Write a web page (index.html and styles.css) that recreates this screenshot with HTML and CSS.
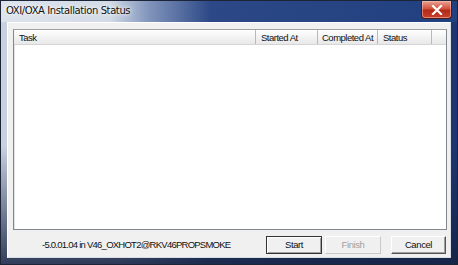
FILE: index.html
```html
<!DOCTYPE html>
<html lang="en">
<head>
  <meta charset="UTF-8" />
  <title>OXI/OXA Installation Status</title>
  <link rel="stylesheet" href="styles.css">
</head>
<body>
  <div class="window">
    <div class="titlebar">
      <span class="title">OXI/OXA Installation Status</span>
      <button class="close-btn">
        <svg width="12" height="10" viewBox="0 0 12 10">
          <path d="M2 1 L10 9 M10 1 L2 9" stroke="#fff" stroke-width="2.2" stroke-linecap="square" />
        </svg>
      </button>
    </div>

    <div class="client">
      <div class="listview">
        <div class="list-header">
          <div class="col col-task">Task</div>
          <div class="col col-started">Started At</div>
          <div class="col col-completed">Completed At</div>
          <div class="col col-status">Status</div>
          <div class="col col-rest"></div>
        </div>
        <div class="list-body"></div>
      </div>

      <div class="footer">
        <span class="version">-5.0.01.04 in V46_OXHOT2@RKV46PROPSMOKE</span>
        <div class="buttons">
          <button class="btn btn-default">Start</button>
          <button class="btn" disabled>Finish</button>
          <button class="btn btn-cancel">Cancel</button>
        </div>
      </div>
    </div>
  </div>
</body>
</html>
```

FILE: styles.css
```css
* {
  box-sizing: border-box;
}

html, body {
  margin: 0;
  padding: 0;
  width: 458px;
  height: 265px;
  overflow: hidden;
  font-family: 'Liberation Sans', Arial, sans-serif;
  font-size: 10px;
}

.window {
  width: 458px;
  height: 265px;
  border: 1px solid #1c2438;
  background:
    linear-gradient(180deg, rgba(22, 34, 66, 0) 55%, rgba(22, 34, 66, 0.85) 100%),
    linear-gradient(90deg, #c9d2e0 0%, #b4c0d6 25%, #3e5a92 45%, #233f7c 70%, #1d3572 100%);
  display: flex;
  flex-direction: column;
  padding: 0 6px 6px 6px;
}

.titlebar {
  height: 21px;
  display: flex;
  align-items: center;
  justify-content: space-between;
  margin: 0 -6px;
  padding: 0 5px 2px 5px;
  background: linear-gradient(90deg, #dde3ec 0%, #d2dae6 24%, #8497bd 32%, #2c4886 46%, #21407f 100%);
}

.title {
  font-family: 'DejaVu Sans', sans-serif;
  font-size: 10px;
  color: #111;
  text-shadow: 0 0 6px #fff, 0 0 3px #fff;
  letter-spacing: -0.4px;
}

.close-btn {
  width: 31px;
  height: 18px;
  margin-top: -1px;
  border: 1px solid #4a1a16;
  border-top: none;
  border-radius: 0 0 4px 4px;
  background: linear-gradient(180deg, #e8a295 0%, #d2523d 45%, #b42a17 55%, #c8412c 100%);
  display: flex;
  align-items: center;
  justify-content: center;
  padding: 0;
  box-shadow: inset 0 0 0 1px rgba(255, 200, 190, 0.5);
}

.client {
  flex: 1;
  background: #f0f0f0;
  border: 1px solid #ffffff;
  border-right-color: #d8dde6;
  border-bottom-color: #d8dde6;
  display: flex;
  flex-direction: column;
  padding: 6px 3px 0 5px;
}

.listview {
  height: 201px;
  border: 1px solid #828790;
  border-top-color: #a0a0a0;
  background: #fff;
  display: flex;
  flex-direction: column;
}

.list-header {
  height: 15px;
  display: flex;
  background: linear-gradient(180deg, #ffffff 0%, #f3f3f3 50%, #e8e8e8 100%);
  border-bottom: 1px solid #d5d5d5;
}

.col {
  border-right: 1px solid #b9b9b9;
  padding: 1px 0 0 5px;
  color: #111;
  white-space: nowrap;
  line-height: 13px;
  font-size: 9.5px;
  letter-spacing: -0.5px;
}

.col-task { width: 242px; }
.col-started { width: 62px; }
.col-completed { width: 60px; padding-left: 4px; }
.col-status { width: 54px; }
.col-rest { flex: 1; border-right: none; }

.list-body {
  flex: 1;
  border-left: 1px solid #e0e0e0;
}

.footer {
  flex: 1;
  display: flex;
  align-items: center;
  justify-content: space-between;
  padding: 2px 0 0 29px;
}

.version {
  color: #111;
  white-space: nowrap;
  font-size: 9.5px;
  letter-spacing: -0.75px;
}

.buttons {
  display: flex;
  gap: 3px;
  margin-right: 1px;
}

.btn {
  width: 56px;
  height: 18px;
  font-family: 'Liberation Sans', Arial, sans-serif;
  font-size: 9.5px;
  letter-spacing: -0.4px;
  color: #111;
  background: #f0f0f0;
  border: 1px solid;
  border-color: #ffffff #707070 #707070 #ffffff;
  box-shadow: inset -1px -1px 0 #a0a0a0;
  padding: 0;
}

.btn-default {
  border-color: #333 #333 #333 #333;
  box-shadow: inset 1px 1px 0 #fff, inset -1px -1px 0 #a0a0a0;
}

.btn:disabled {
  color: #a0a0a0;
  border-color: #ffffff #c8c8c8 #c8c8c8 #ffffff;
  box-shadow: none;
}

.btn-cancel {
  margin-left: 7px;
  width: 55px;
  border-color: #ffffff #555 #555 #ffffff;
}
```
